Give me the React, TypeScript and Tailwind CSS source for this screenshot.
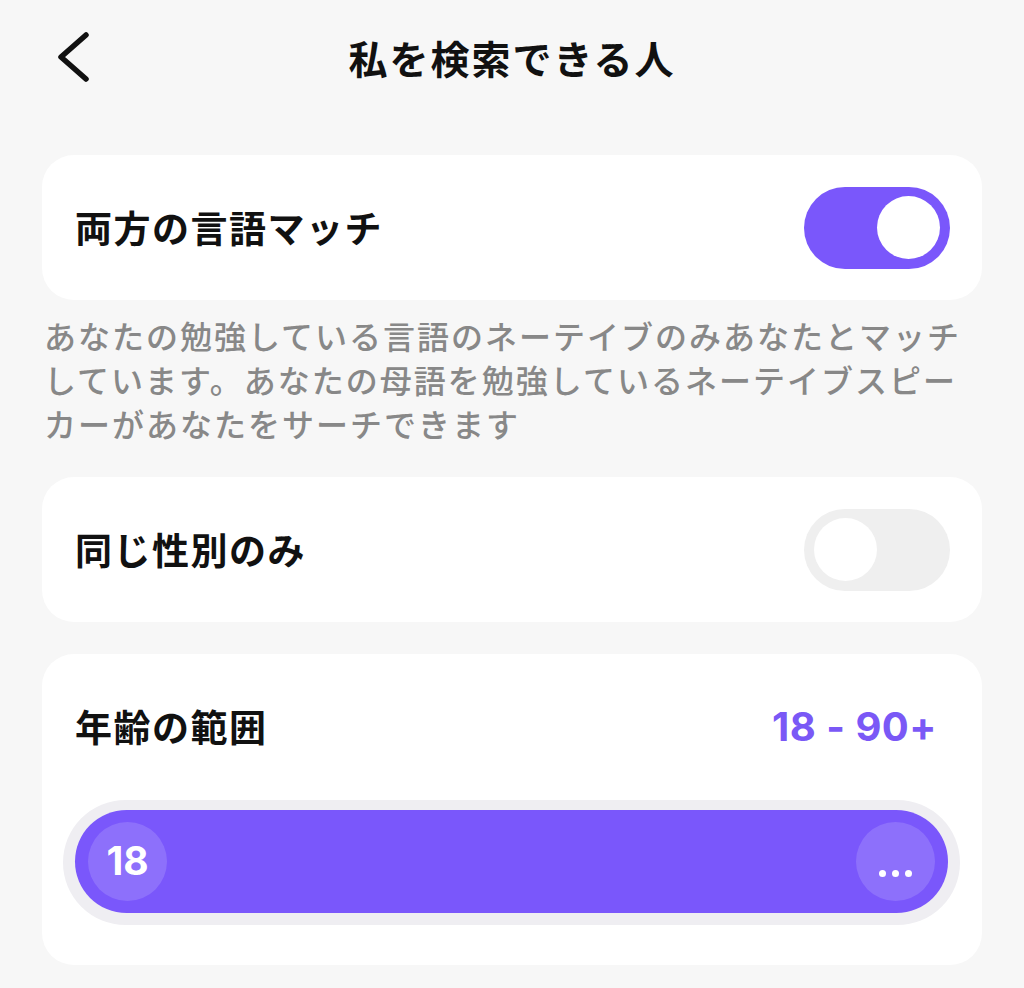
import { useState } from 'react'

const JP = { fontFamily: '"Noto Sans CJK JP", "Noto Sans", sans-serif' }
const NUM = { fontFamily: 'Inter, "Noto Sans CJK JP", sans-serif' }

function Toggle({ on, onChange }: { on: boolean; onChange: (v: boolean) => void }) {
  return (
    <button
      onClick={() => onChange(!on)}
      className={
        on
          ? 'flex h-[82px] w-[146px] items-center justify-end rounded-full bg-[#7a57fb] px-[10px]'
          : 'flex h-[82px] w-[146px] items-center justify-start rounded-full bg-[#efefef] px-[10px]'
      }
    >
      <span className="block h-[63px] w-[63px] rounded-full bg-white" />
    </button>
  )
}

export default function App() {
  const [both, setBoth] = useState(true)
  const [same, setSame] = useState(false)

  return (
    <div className="min-h-[988px] w-full bg-[#f7f7f7] px-[42px]" style={JP}>
      <div className="relative flex h-[114px] items-center justify-center">
        <button className="absolute left-[14px] top-[32px]" title="戻る">
          <svg width="34" height="50" viewBox="0 0 34 50" fill="none">
            <polyline
              points="30,3 5,25 30,47"
              stroke="#111"
              strokeWidth="5.5"
              strokeLinecap="round"
              strokeLinejoin="round"
            />
          </svg>
        </button>
        <div className="text-[39px] font-bold tracking-[2px] text-[#111]">私を検索できる人</div>
      </div>

      <div className="mt-[41px] flex h-[145px] items-center justify-between rounded-[32px] bg-white pl-[33px] pr-[32px]">
        <div className="text-[37px] font-bold tracking-[1.5px] text-[#111]">両方の言語マッチ</div>
        <Toggle on={both} onChange={setBoth} />
      </div>

      <p className="mt-[13px] pl-[2px] text-[32px] font-medium leading-[44px] tracking-[2px] text-[#888888]">
        あなたの勉強している言語のネーテイブのみあなたとマッチ
        <br />
        しています。あなたの母語を勉強しているネーテイブスピー
        <br />
        カーがあなたをサーチできます
      </p>

      <div className="mt-[32px] flex h-[145px] items-center justify-between rounded-[32px] bg-white pl-[33px] pr-[32px]">
        <div className="text-[37px] font-bold tracking-[1.5px] text-[#111]">同じ性別のみ</div>
        <Toggle on={same} onChange={setSame} />
      </div>

      <div className="mt-[32px] rounded-[32px] bg-white pb-[40px] pl-[21px] pr-[22px] pt-[48px]">
        <div className="flex h-[50px] items-center justify-between pl-[12px] pr-[23px]">
          <div className="text-[37px] font-bold tracking-[1.5px] text-[#111]">年齢の範囲</div>
          <div className="text-[40px] font-bold tracking-[0.5px] text-[#7a58f6]" style={NUM}>
            18 - 90+
          </div>
        </div>

        <div className="mt-[48px] rounded-full bg-[#efeef2] px-[12px] pb-[12px] pt-[10px]">
          <div className="flex h-[103px] items-center justify-between rounded-full bg-[#7a57fb] px-[13px]">
            <div className="flex h-[79px] w-[79px] items-center justify-center rounded-full bg-white/15">
              <span className="text-[39px] font-bold text-white" style={NUM}>
                18
              </span>
            </div>
            <div className="flex h-[79px] w-[79px] items-center justify-center gap-[6px] rounded-full bg-white/15 pt-[24px]">
              <span className="block h-[7px] w-[7px] rounded-full bg-white" />
              <span className="block h-[7px] w-[7px] rounded-full bg-white" />
              <span className="block h-[7px] w-[7px] rounded-full bg-white" />
            </div>
          </div>
        </div>
      </div>
    </div>
  )
}
